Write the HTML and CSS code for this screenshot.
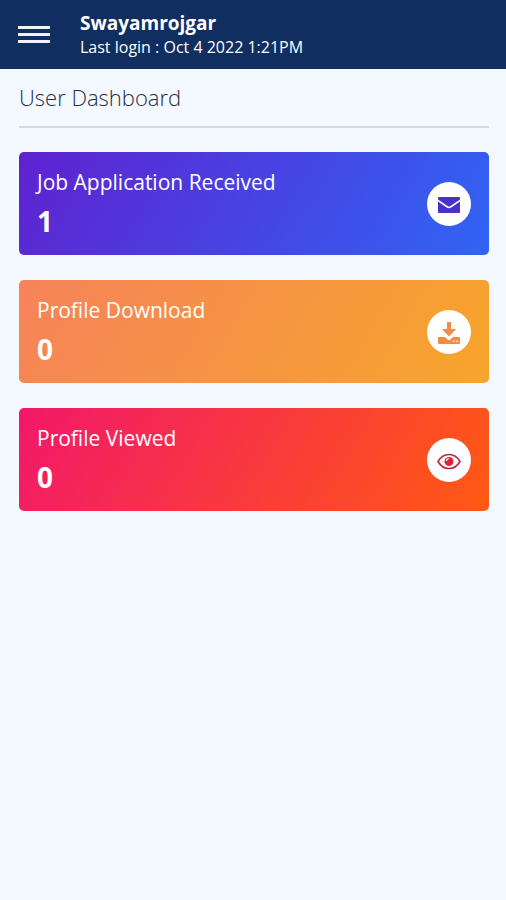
FILE: index.html
```html
<!DOCTYPE html>
<html lang="en">
<head>
    <meta charset="UTF-8">
    <meta name="viewport" content="width=device-width, initial-scale=1.0">
    <link rel="stylesheet" href="styles.css">
    <title>User Dashboard</title>
</head>
<body>

<header class="topbar">
    <button type="button" class="menu-btn" aria-label="Menu">
        <span></span>
        <span></span>
        <span></span>
    </button>
    <div class="user-info">
        <div class="user-name">Swayamrojgar</div>
        <div class="last-login">Last login : Oct 4 2022 1:21PM</div>
    </div>
</header>

<main class="content">
    <h1 class="page-title">User Dashboard</h1>

    <div class="cards">
        <div class="card card-blue">
            <div>
                <h2>Job Application Received</h2>
                <p class="count">1</p>
            </div>
            <div class="icon">
                <svg width="22" height="18" viewBox="0 0 22 18" fill="#4a2fcb">
                    <path d="M1 2H21Q22 2 22 3V4.500L12.500 11Q11 12 9.500 11L0 4.500V3Q0 2 1 2Z"/>
                    <path d="M0 6.500L8.700 12.500Q11 14 13.300 12.500L22 6.500V17Q22 18 21 18H1Q0 18 0 17Z"/>
                </svg>
            </div>
        </div>

        <div class="card card-orange">
            <div>
                <h2>Profile Download</h2>
                <p class="count">0</p>
            </div>
            <div class="icon">
                <svg width="22" height="24" viewBox="0 0 22 24" fill="#f38b45">
                    <path d="M9 2H13V9H18L11 16.500L4 9H9Z"/>
                    <path fill-rule="evenodd" d="M1 17H7L9.500 19.500Q11 20.800 12.500 19.500L15 17H21Q22 17 22 18V23Q22 24 21 24H1Q0 24 0 23V18Q0 17 1 17ZM15 20.500V22H16.500V20.500ZM18.500 20.500V22H20V20.500Z"/>
                </svg>
            </div>
        </div>

        <div class="card card-red">
            <div>
                <h2>Profile Viewed</h2>
                <p class="count">0</p>
            </div>
            <div class="icon">
                <svg width="24" height="20" viewBox="0 0 24 20">
                    <path d="M1 11.500Q5 4.500 12 4.500T23 11.500Q19 18.500 12 18.500T1 11.500Z" fill="none" stroke="#b9283f" stroke-width="1.600"/>
                    <circle cx="12" cy="11.500" r="4.500" fill="#e0203a"/>
                    <path d="M9.500 11Q9.500 8.500 12 8.500" fill="none" stroke="#fff" stroke-width="1.200"/>
                </svg>
            </div>
        </div>
    </div>
</main>

</body>
</html>
```

FILE: styles.css
```css
* {
    box-sizing: border-box;
}

body {
    margin: 0;
    font-family: "Open Sans", "Noto Sans", sans-serif;
    background-color: #f4f8ff;
    color: #fff;
}

.topbar {
    display: flex;
    align-items: center;
    gap: 30px;
    height: 69px;
    padding: 0 18px;
    background-color: #112e60;
}

.menu-btn {
    display: flex;
    flex-direction: column;
    gap: 4px;
    width: 32px;
    padding: 0;
    border: none;
    background: none;
    cursor: pointer;
}

.menu-btn span {
    height: 3px;
    width: 100%;
    background-color: #f3f0fa;
}

.user-name {
    font-size: 19px;
    font-weight: 700;
    line-height: 24px;
}

.last-login {
    font-size: 16px;
    line-height: 24px;
}

.content {
    padding: 12px 17px 24px 19px;
}

.page-title {
    margin: 0 0 24px;
    padding-bottom: 13px;
    border-bottom: 2px solid #d5dae2;
    color: #1f2e4a;
    font-size: 22px;
    font-weight: 300;
    line-height: 32px;
}

.cards {
    display: flex;
    flex-direction: column;
    gap: 25px;
}

.card {
    display: flex;
    justify-content: space-between;
    align-items: center;
    padding: 15px 18px;
    border-radius: 5px;
}

.card-blue {
    background: linear-gradient(120deg, #5f22d0, #3064f4);
}

.card-orange {
    background: linear-gradient(120deg, #f6835a, #f7a52b);
}

.card-red {
    background: linear-gradient(120deg, #f2186a, #ff5a12);
}

.card h2 {
    margin: 0 0 5px;
    font-size: 21px;
    font-weight: 400;
    line-height: 30px;
}

.count {
    margin: 0;
    font-size: 28px;
    font-weight: 700;
    line-height: 38px;
}

.icon {
    display: flex;
    justify-content: center;
    align-items: center;
    width: 44px;
    height: 44px;
    border-radius: 50%;
    background-color: #fff;
}
```
